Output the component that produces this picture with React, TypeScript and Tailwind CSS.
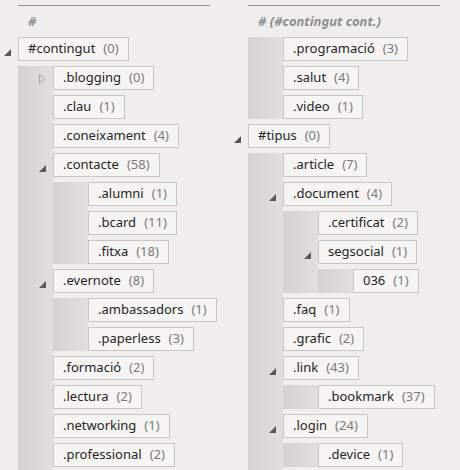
import React from 'react'

interface TagNode {
  label: string
  count: number
  collapsed?: boolean
  children?: TagNode[]
}

const leftTree: TagNode[] = [
  {
    label: '#contingut',
    count: 0,
    children: [
      { label: '.blogging', count: 0, collapsed: true },
      { label: '.clau', count: 1 },
      { label: '.coneixament', count: 4 },
      {
        label: '.contacte',
        count: 58,
        children: [
          { label: '.alumni', count: 1 },
          { label: '.bcard', count: 11 },
          { label: '.fitxa', count: 18 },
        ],
      },
      {
        label: '.evernote',
        count: 8,
        children: [
          { label: '.ambassadors', count: 1 },
          { label: '.paperless', count: 3 },
        ],
      },
      { label: '.formació', count: 2 },
      { label: '.lectura', count: 2 },
      { label: '.networking', count: 1 },
      { label: '.professional', count: 2 },
    ],
  },
]

const continued: TagNode[] = [
  { label: '.programació', count: 3 },
  { label: '.salut', count: 4 },
  { label: '.video', count: 1 },
]

const rightTree: TagNode[] = [
  {
    label: '#tipus',
    count: 0,
    children: [
      { label: '.article', count: 7 },
      {
        label: '.document',
        count: 4,
        children: [
          { label: '.certificat', count: 2 },
          { label: 'segsocial', count: 1, children: [{ label: '036', count: 1 }] },
        ],
      },
      { label: '.faq', count: 1 },
      { label: '.grafic', count: 2 },
      { label: '.link', count: 43, children: [{ label: '.bookmark', count: 37 }] },
      { label: '.login', count: 24, children: [{ label: '.device', count: 1 }] },
    ],
  },
]

function ExpandedArrow() {
  return (
    <svg width="7" height="7" viewBox="0 0 7 7" className="absolute left-[-15px] top-[11px]">
      <polygon points="7,0 7,7 0,7" fill="#585858" />
    </svg>
  )
}

function CollapsedArrow() {
  return (
    <svg width="6" height="10" viewBox="0 0 6 10" className="absolute left-[-15px] top-[7px]">
      <polygon points="0.5,0.5 5.5,5 0.5,9.5" fill="none" stroke="#a8a6a4" strokeWidth="1" />
    </svg>
  )
}

function Band({ children, tail }: { children: React.ReactNode; tail?: boolean }) {
  return (
    <div className="flex">
      <div className="w-[35px] shrink-0 bg-gradient-to-r from-[#d4d2d0] to-[#e1dfdd]" />
      <div className={`flex flex-col items-start gap-[5px] ${tail ? 'pb-[20px]' : ''}`}>{children}</div>
    </div>
  )
}

function Row({ node }: { node: TagNode }) {
  return (
    <div className="relative flex h-6 items-center whitespace-nowrap border border-[#c8c6c4] bg-[#f5f4f3] pl-[9px] pr-[9px] text-[13px]">
      {node.children && <ExpandedArrow />}
      {node.collapsed && <CollapsedArrow />}
      <span className="text-[#262626]">{node.label}</span>
      <span className="ml-[8px] text-[#7a7a7a]">({node.count})</span>
    </div>
  )
}

function TreeNode({ node, tail }: { node: TagNode; tail?: boolean }) {
  return (
    <div className="flex flex-col items-start gap-[5px]">
      <Row node={node} />
      {node.children && (
        <Band tail={tail}>
          {node.children.map((c) => (
            <TreeNode key={c.label} node={c} />
          ))}
        </Band>
      )}
    </div>
  )
}

function Column({ title, children }: { title: string; children: React.ReactNode }) {
  return (
    <div className="flex w-[230px] flex-col pt-[5px]">
      <div className="ml-[18px] w-[192px] border-t border-[#8e8e8e]" />
      <div className="mt-[5px] pl-[28px] text-[13px] font-bold italic leading-[20px] text-[#8e8e8e]">{title}</div>
      <div className="mt-[6px] flex flex-col items-start gap-[5px] pl-[18px]">{children}</div>
    </div>
  )
}

export default function App() {
  return (
    <div
      className="flex h-[470px] w-[460px] overflow-hidden bg-[#efeeec]"
      style={{ fontFamily: '"Noto Sans", "Open Sans", sans-serif' }}
    >
      <Column title="#">
        {leftTree.map((n) => (
          <TreeNode key={n.label} node={n} tail />
        ))}
      </Column>
      <Column title="# (#contingut cont.)">
        <Band>
          {continued.map((n) => (
            <Row key={n.label} node={n} />
          ))}
        </Band>
        {rightTree.map((n) => (
          <TreeNode key={n.label} node={n} tail />
        ))}
      </Column>
    </div>
  )
}
